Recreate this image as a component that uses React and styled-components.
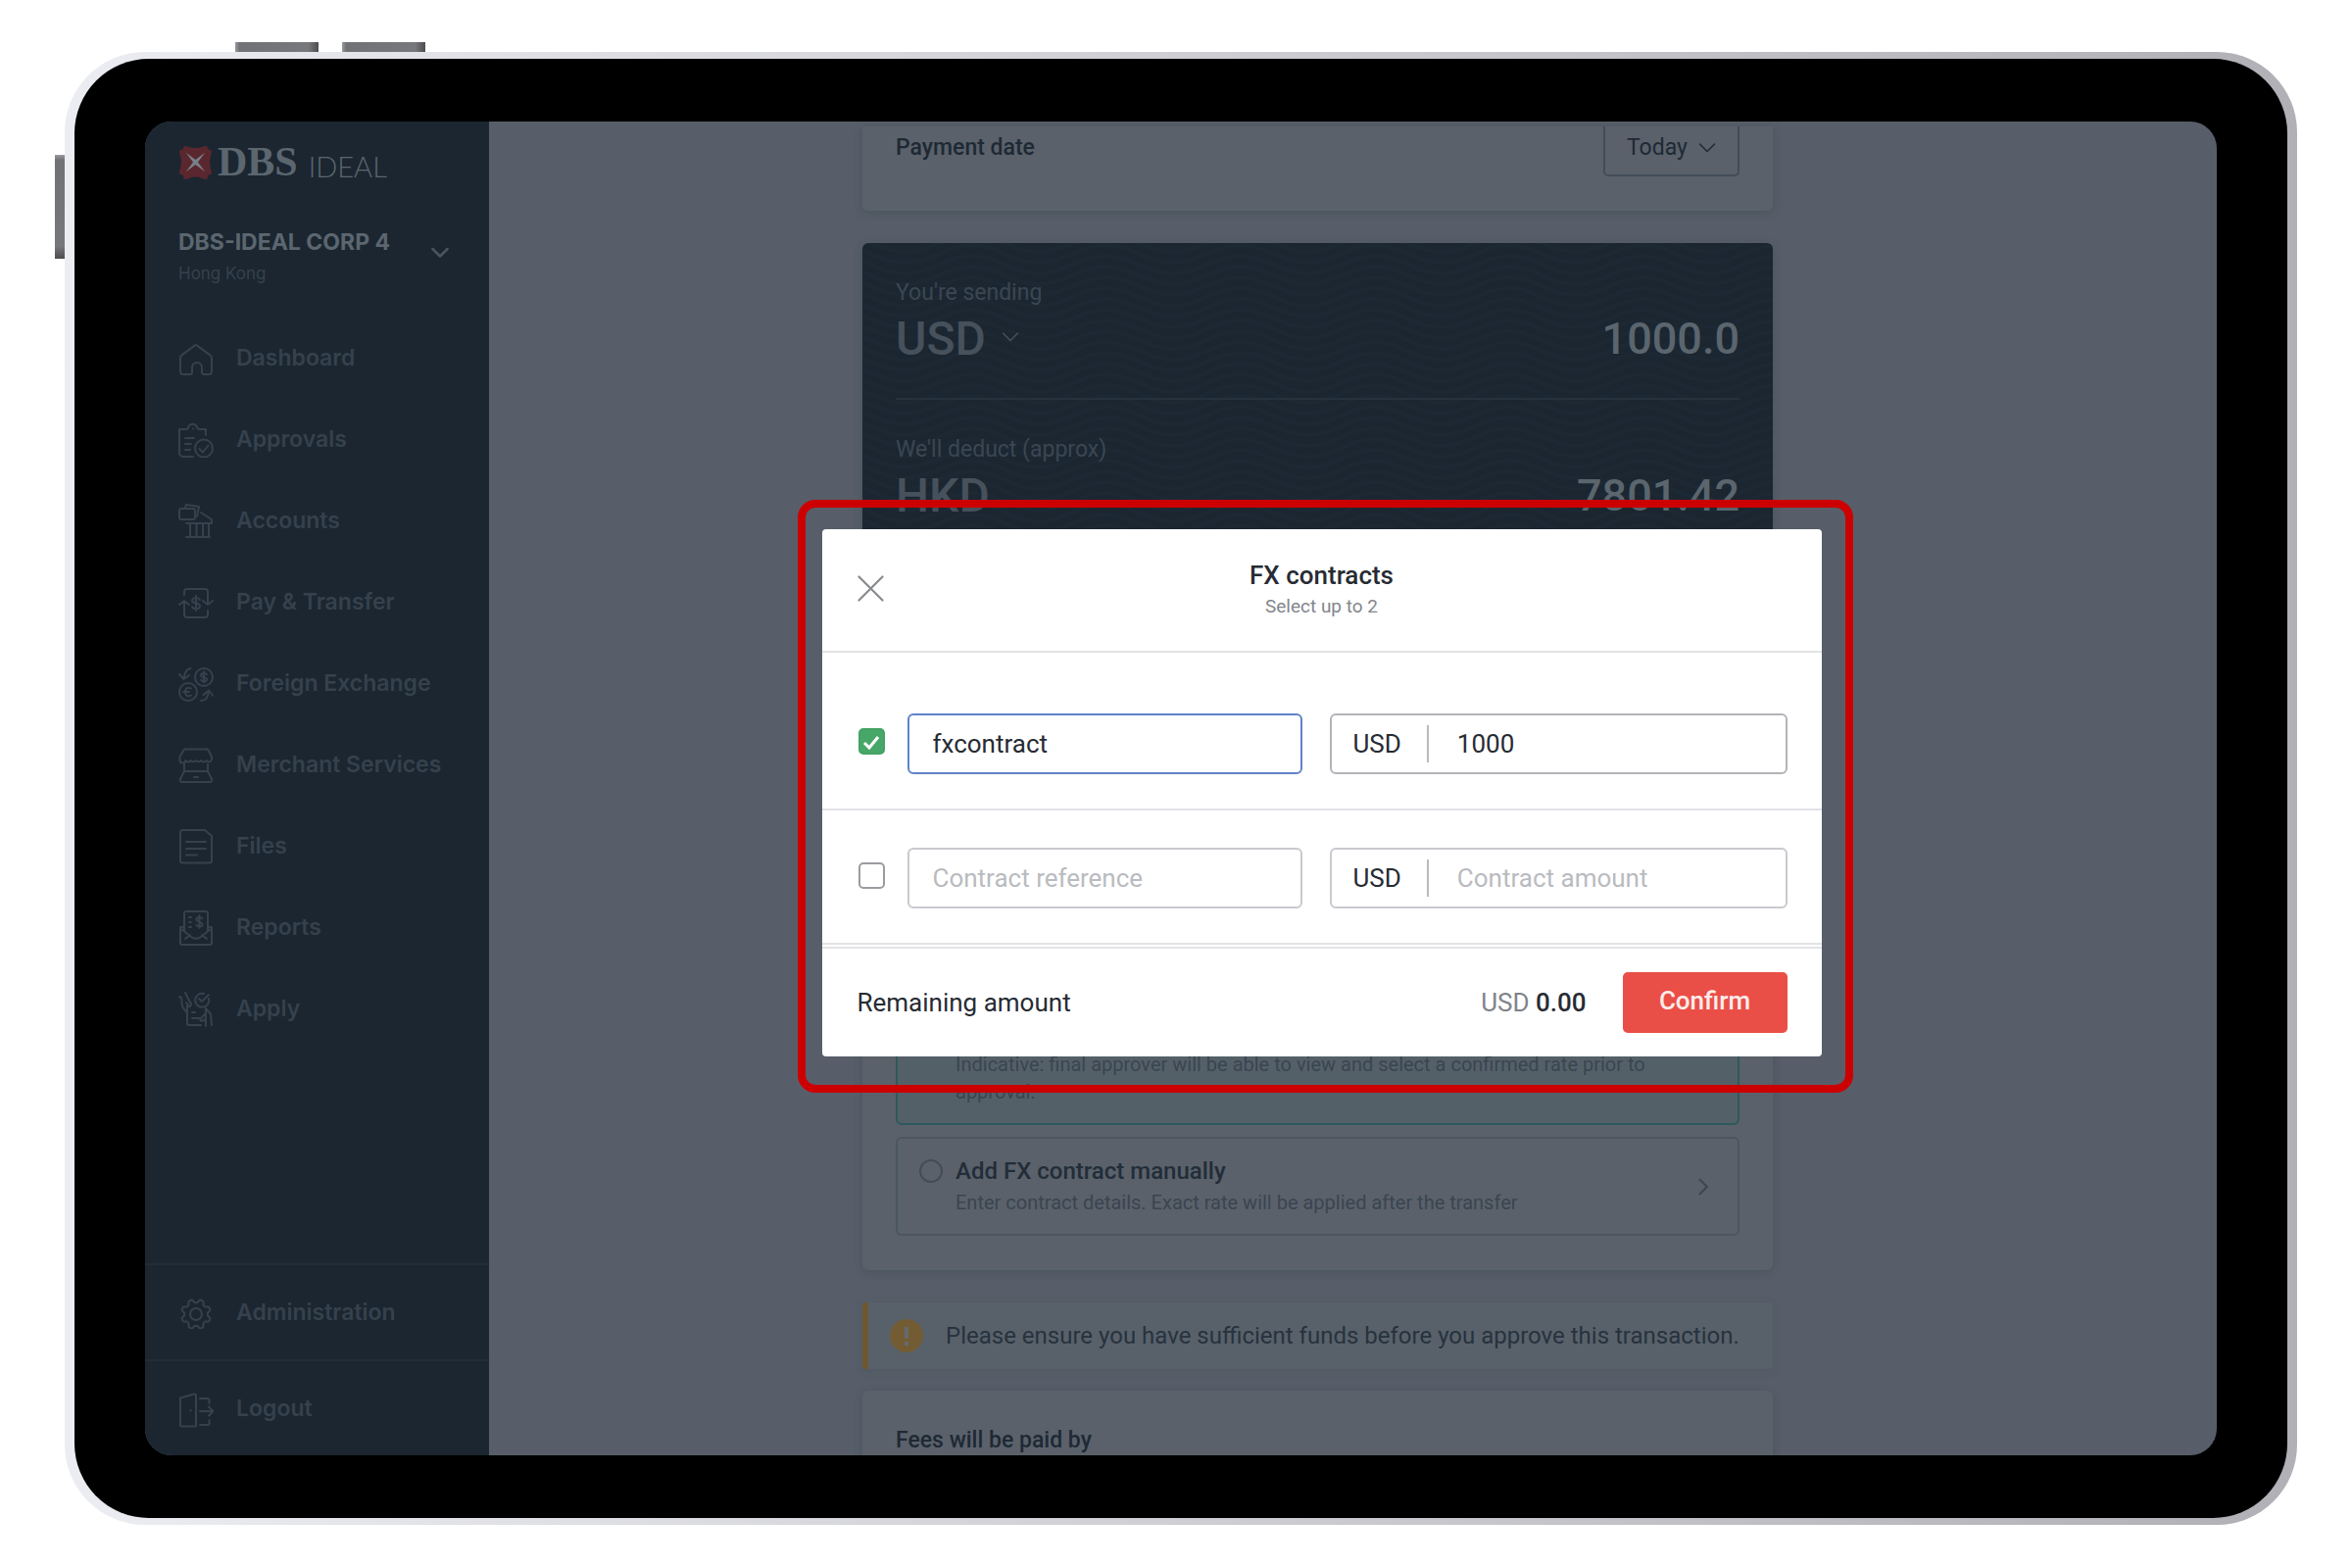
import { useId, useState } from "react";
import styled, { createGlobalStyle } from "styled-components";

const GlobalStyle = createGlobalStyle`
  :root {
    --color-ink: #1b2631;
    --color-page: #575e69;
    --color-card: #5a616a;
    --color-text: #1e2935;
    --color-text-soft: #3a4551;
    --color-nav: #35414c;
    --color-light: #5c666f;
    --color-line: #e2e3e6;

    --font-body: Roboto, "Liberation Sans", sans-serif;
    --font-nav: Inter, "Liberation Sans", sans-serif;
  }

  * {
    box-sizing: border-box;
  }

  body {
    margin: 0;
    background: #fff;
    font-family: var(--font-body);
  }

  button,
  input,
  select {
    font: inherit;
    color: inherit;
    margin: 0;
  }

  p,
  h1,
  h2 {
    margin: 0;
    font: inherit;
  }

  svg {
    display: block;
    flex: none;
  }
`;

/* ---------- Tablet ---------- */

const Page = styled.div`
  display: flex;
  height: 100vh;
  padding: 53px 56px 44px 66px;
`;

const Frame = styled.div`
  position: relative;
  display: flex;
  flex: 1;
  min-width: 0;
  padding: 7px 10px;
  border-radius: 82px;
  background: linear-gradient(90deg, #ecedf2, #b0b0b6);
`;

const Bezel = styled.div`
  display: flex;
  flex: 1;
  min-width: 0;
  padding: 64px 72px;
  border-radius: 76px;
  background: #000;
`;

const Screen = styled.div`
  display: flex;
  flex: 1;
  min-width: 0;
  overflow: hidden;
  border-radius: 27px;
  background: var(--color-page);
`;

const VolumeKeys = styled.div`
  position: absolute;
  top: -10px;
  left: 174px;
  display: flex;
  gap: 24px;

  span {
    width: 85px;
    height: 10px;
    background: linear-gradient(90deg, #9b9c9f, #717276 5%, #77787c 88%, #4c4c4e);
  }
`;

const PowerKey = styled.div`
  position: absolute;
  top: 105px;
  left: -10px;
  width: 10px;
  height: 106px;
  background: linear-gradient(#9b9c9f, #717276 5%, #77787c 88%, #4c4c4e);
`;

/* ---------- Sidebar ---------- */

const SidebarWrapper = styled.nav`
  display: flex;
  flex: none;
  flex-direction: column;
  width: 351px;
  background: var(--color-ink);
  color: var(--color-nav);
  font-family: var(--font-nav);
`;

const LogoRow = styled.div`
  display: flex;
  align-items: center;
  gap: 5px;
  height: 36px;
  margin: 23px 34px 0;
  color: var(--color-light);
  line-height: 36px;
`;

const LogoName = styled.span`
  font-family: "Liberation Serif", serif;
  font-size: 42px;
  font-weight: 700;
`;

const LogoProduct = styled.span`
  padding: 10px 0 0 6px;
  font-family: Lato, sans-serif;
  font-size: 29px;
  font-weight: 300;
`;

const Company = styled.button`
  display: flex;
  justify-content: space-between;
  margin: 49px 0 32px;
  padding: 0 41px 0 34px;
  border: 0;
  background: none;
  text-align: left;

  strong {
    display: block;
    color: var(--color-light);
    font-size: 23px;
    font-weight: 700;
    line-height: 30px;
  }

  small {
    display: block;
    margin-top: 5px;
    font-size: 17px;
    line-height: 24px;
  }

  svg {
    margin-top: 17px;
    color: #4a555f;
  }
`;

const NavLink = styled.a`
  display: flex;
  align-items: center;
  gap: 23px;
  height: ${({ $tall }) => ($tall ? "98px" : "83px")};
  padding: 0 34px;
  border-top: ${({ $tall }) => ($tall ? "2px solid #222d38" : "0")};
  color: inherit;
  font-size: 23px;
  font-weight: 600;
  text-decoration: none;

  svg {
    margin-top: 3px;
  }
`;

const NavFooter = styled.div`
  margin-top: auto;
`;

/* ---------- Transfer form ---------- */

const Main = styled.main`
  position: relative;
  flex: 1;
  min-width: 0;
  padding: 5px 72px 0 0;
  overflow: hidden;
`;

const Column = styled.div`
  display: flex;
  flex-direction: column;
  max-width: 929px;
  margin: 0 auto;
  color: var(--color-text);
  font-size: 23px;
  line-height: 28px;
`;

const Card = styled.section`
  border-radius: 6px;
  background: var(--color-card);
  box-shadow: 0 2px 8px rgba(40, 62, 66, 0.3);
`;

const DateCard = styled(Card)`
  display: flex;
  align-items: baseline;
  justify-content: space-between;
  padding: 0 34px 35px;
  border-radius: 0 0 6px 6px;
  font-weight: 500;
`;

const PickerWrapper = styled.div`
  position: relative;

  svg {
    position: absolute;
    top: ${({ $top }) => $top};
    right: ${({ $right }) => $right};
    pointer-events: none;
  }
`;

const DateSelect = styled.select`
  appearance: none;
  display: block;
  height: 51px;
  padding: 0 51px 6px 22px;
  border: 2px solid #414d58;
  border-top: 0;
  border-radius: 0 0 5px 5px;
  background: none;
  font-weight: 400;
`;

const ExchangeCard = styled(Card)`
  margin-top: 33px;
  overflow: hidden;
`;

const Amounts = styled.div`
  position: relative;
  padding: 0 34px;
  background: var(--color-ink);
  color: #3b4652;
`;

const WaveArt = styled.svg`
  position: absolute;
  top: 0;
  left: 0;
  width: 100%;
  height: 100%;
`;

const AmountBlock = styled.div`
  position: relative;
  padding: 37px 0 33px;
  border-bottom: ${({ $last }) => ($last ? "0" : "2px solid #25313c")};
`;

const AmountRow = styled.div`
  display: flex;
  justify-content: space-between;
  margin-top: 6px;
  color: #46515c;
  font-size: 48px;
  font-weight: 500;
  line-height: 54px;
`;

const CurrencySelect = styled.select`
  appearance: none;
  display: block;
  height: 54px;
  padding: 0 34px 0 0;
  border: 0;
  background: none;
`;

const BigInput = styled.input`
  width: 300px;
  height: 54px;
  padding: 0;
  border: 0;
  background: none;
  color: #5a656e;
  font-size: 45px;
  text-align: right;
`;

const BigAmount = styled.output`
  color: #5a656e;
  font-size: 45px;
`;

const Options = styled.div`
  display: grid;
  gap: 12px;
  padding: 453px 34px 35px;
`;

const Option = styled.label`
  display: flex;
  align-items: center;
  gap: 13px;
  padding: 18px 25px 18px 22px;
  border: 2px solid ${({ $active }) => ($active ? "#2d595b" : "#4b5660")};
  border-radius: 6px;
  background: ${({ $active }) => ($active ? "#546068" : "none")};

  svg {
    color: #3c4752;
  }
`;

const Radio = styled.input`
  appearance: none;
  flex: none;
  align-self: flex-start;
  width: 24px;
  height: 24px;
  margin-top: 3px;
  border: 2px solid #424d58;
  border-radius: 50%;

  &:checked {
    border: 8px solid #2d595b;
  }
`;

const OptionText = styled.div`
  flex: 1;
  color: var(--color-text-soft);
  font-size: 20px;
  line-height: 28px;

  h2 {
    min-height: 30px;
    margin-bottom: 3px;
    color: #222d39;
    font-size: 24px;
    font-weight: 500;
    line-height: 30px;
  }
`;

const Alert = styled.div`
  display: flex;
  align-items: center;
  gap: 23px;
  height: 68px;
  margin-top: 33px;
  padding-left: 22px;
  border-left: 6px solid #6f5831;
  border-radius: 4px;
  background: #58616a;
  color: #27323e;
  font-size: 24px;
  box-shadow: 0 2px 8px rgba(40, 62, 66, 0.15);
`;

const FeesCard = styled(Card)`
  height: 160px;
  margin-top: 22px;
  padding: 37px 34px;
  font-weight: 500;
`;

/* ---------- FX contracts dialog ---------- */

const Overlay = styled.div`
  position: absolute;
  inset: 0;
  display: flex;
  align-items: center;
  justify-content: center;
  padding: 15px 57px 0 0;
`;

const Highlight = styled.div`
  width: 100%;
  max-width: 1077px;
  padding: 22px 24px 29px 17px;
  border: 8px solid #c00;
  border-radius: 18px;
`;

const Dialog = styled.form`
  border-radius: 4px;
  background: #fff;
  color: #272b33;
  font-size: 26px;
  line-height: 32px;
`;

const DialogHeader = styled.header`
  display: grid;
  grid-template-columns: 1fr auto 1fr;
  align-items: center;
  height: 126px;
  padding: 0 36px 2px;
  border-bottom: 2px solid var(--color-line);
  text-align: center;

  h1 {
    font-weight: 500;
  }

  p {
    margin-top: 4px;
    color: #83868c;
    font-size: 19px;
    line-height: 24px;
  }
`;

const CloseButton = styled.button`
  justify-self: start;
  padding: 0;
  border: 0;
  background: none;
  color: #8a8c90;
`;

const ContractList = styled.div`
  padding-top: 24px;
`;

const ContractRow = styled.div`
  display: flex;
  align-items: center;
  gap: 23px;
  padding: 38px 35px 35px 37px;
  border-bottom: 2px solid var(--color-line);
`;

const CheckWrapper = styled.div`
  position: relative;
  flex: none;
  width: 27px;
  height: 27px;
  margin-bottom: 5px;

  svg {
    position: absolute;
    inset: 0;
    pointer-events: none;
  }
`;

const CheckBox = styled.input`
  appearance: none;
  display: block;
  width: 27px;
  height: 27px;
  border: 2px solid #9a9ca1;
  border-radius: 5px;
  background: #fff;

  &:checked {
    border-color: #43a264;
    background: #46a768;
  }
`;

const Fields = styled.div`
  display: grid;
  flex: 1;
  grid-template-columns: 403fr 467fr;
  gap: 28px;
`;

const fieldBorder = ({ $focused, $filled }) =>
  $focused ? "#5f83c9" : $filled ? "#b3b4b8" : "#c8cace";

const Input = styled.input`
  min-width: 0;
  width: 100%;
  height: 62px;
  padding: 0 24px;
  border: 2px solid ${fieldBorder};
  border-radius: 6px;
  outline: 0;
  background: #fff;

  &::placeholder {
    color: #b9bbc0;
    opacity: 1;
  }
`;

const AmountField = styled.div`
  display: flex;
  align-items: center;
  height: 62px;
  padding-left: 22px;
  border: 2px solid ${fieldBorder};
  border-radius: 6px;

  label {
    padding-right: 26px;
    line-height: 38px;
    border-right: 2px solid #b9bbbf;
  }

  input {
    height: 58px;
    border: 0;
    padding-left: 29px;
  }
`;

const DialogFooter = styled.footer`
  display: flex;
  align-items: center;
  height: 112px;
  margin-top: 2px;
  padding: 0 35px 0 36px;
  border-top: 2px solid var(--color-line);
`;

const Remaining = styled.p`
  margin: 0 37px 0 auto;
  color: #808389;

  strong {
    color: #272b33;
    font-weight: 500;
  }
`;

const ConfirmButton = styled.button`
  width: 168px;
  height: 62px;
  padding: 0 0 4px;
  border: 0;
  border-radius: 5px;
  background: #ea4f47;
  color: #fdeceb;
  font-weight: 500;
`;

/* ---------- Icons ---------- */

const Icon = ({ children, size = 36, width = 2 }) => (
  <svg
    width={size}
    height={size}
    viewBox="0 0 36 36"
    fill="none"
    stroke="currentColor"
    strokeWidth={width}
    strokeLinecap="round"
    strokeLinejoin="round"
    aria-hidden="true"
  >
    {children}
  </svg>
);

const HomeIcon = () => (
  <Icon>
    <path d="M2 17a3 3 0 0 1 1.2-2.4l13.3-10a2 2 0 0 1 2.6 0l13.6 10A3 3 0 0 1 34 17v14a3 3 0 0 1-3 3h-5a2 2 0 0 1-2-2v-5a5 5 0 0 0-10 0v5a2 2 0 0 1-2 2H5a3 3 0 0 1-3-3z" />
  </Icon>
);

const ApprovalsIcon = () => (
  <Icon>
    <path d="M15 35H5a4 4 0 0 1-4-4V7h7c1.500 0 2-1 2.300-2.200a4.500 4.500 0 0 1 8.600 0C19.200 6 20 7 21.500 7H28v6" />
    <path d="M15 6.500v.1M7 16h9M7 22h6M7 28h5" />
    <circle cx="26" cy="26.500" r="9" />
    <path d="M21.500 27l3.500 3.500 5.500-7" />
  </Icon>
);

const AccountsIcon = () => (
  <Icon>
    <rect x="1" y="5" width="16" height="11" rx="2" />
    <path d="M7 4l1-3 13 2-2 10M23 9l11 7v4H8M12 20v14M18.500 20v14M25 20v14M31 20v14M8 34h24" />
  </Icon>
);

const TransferIcon = () => (
  <Icon>
    <path d="M6 10V7a3 3 0 0 1 3-3h18a3 3 0 0 1 3 3v13M25 16l5 4 5-4M30 26v4a3 3 0 0 1-3 3H9a3 3 0 0 1-3-3V16M1 20l5-4 5 4" />
    <path d="M22 15c-.8-1.400-2.300-2-4-2-2.200 0-4 1-4 3 0 3.500 8 1.700 8 5.200 0 2-1.800 3-4 3-1.800 0-3.300-.6-4-2M18 11v15" />
  </Icon>
);

const ExchangeIcon = () => (
  <Icon>
    <circle cx="26" cy="11" r="9" />
    <circle cx="10" cy="26" r="9" />
    <path d="M29 8.300c-.6-1-1.700-1.400-3-1.400-1.700 0-3 .8-3 2.100 0 3 6 1.300 6 4.200 0 1.300-1.300 2-3 2-1.400 0-2.500-.5-3-1.400M26 5.500v11" />
    <path d="M13 22.500c-3-2-6 0-6 3.500s3 5.500 6 3.500M5 26h6" />
    <path d="M12.500 2C8 3 6 7 5.500 13M1 8l4.500 5L11 9M23 35c5 0 7.500-4 8-10M25.500 29l5.500-4.500 4 5" />
  </Icon>
);

const MerchantIcon = () => (
  <Icon>
    <path d="M6 1.500h24L34 9v3a3 3 0 0 1-5.500 1 3.200 3.200 0 0 1-5.300 0 3.200 3.200 0 0 1-5.200 0 3.200 3.200 0 0 1-5.200 0 3.200 3.200 0 0 1-5.300 0A3 3 0 0 1 1.500 12V9z" />
    <path d="M6 17v7h24v-7M6 24l-4 8a2 2 0 0 0 2 3h28a2 2 0 0 0 2-3l-4-8M16 30h4" />
  </Icon>
);

const FilesIcon = () => (
  <Icon>
    <path d="M5 1h22l7 6v25a2.500 2.500 0 0 1-2.500 2.500h-27A2.500 2.500 0 0 1 2 32V4a3 3 0 0 1 3-3zM8 13h20M8 20h20M8 26.500h11" />
  </Icon>
);

const ReportsIcon = () => (
  <Icon>
    <path d="M6 21V3a2 2 0 0 1 2-2h20a2 2 0 0 1 2 2v18M6 17H2v16a2 2 0 0 0 2 2h28a2 2 0 0 0 2-2V17h-4M3 19l10 8c3 2 7 2 10 0l10-8M12 25l-5 4M24 25l5 4" />
    <path d="M11 7h2M11 12h2M11 17h2" />
    <path d="M24.500 8.300c-.6-1-1.700-1.400-3-1.400-1.700 0-3 .8-3 2.300 0 3.200 6 1.800 6 5 0 1.500-1.300 2.200-3 2.200-1.400 0-2.500-.5-3-1.400M21.500 5v13" />
  </Icon>
);

const ApplyIcon = () => (
  <Icon>
    <path d="M1 5l2 1 1 9 5 7M7 1l5 10c2 1 1 4-1 4l-3-4M9 14v18a2 2 0 0 0 2 2h12M9 22v9" />
    <path d="M31 7a7 7 0 1 1-5-5M21 7l3 3 7-7" />
    <path d="M14 21h3M14 27h7M28 35v-7l-4 2c-2 0-2-2-1-3l5-5v-5l5 6 1 11M28 22v5" />
  </Icon>
);

/* eight rounded teeth around a hub */
const gearPoints = Array.from({ length: 160 }, (_, i) => {
  const angle = (i / 160) * Math.PI * 2;
  const radius = 13.5 - 1.7 * Math.tanh(2 * Math.cos(angle * 8));
  const x = 18 + radius * Math.cos(angle);
  const y = 18 + radius * Math.sin(angle);
  return `${x.toFixed(2)},${y.toFixed(2)}`;
}).join(" ");

const GearIcon = () => (
  <Icon>
    <polygon points={gearPoints} />
    <circle cx="18" cy="18" r="6" />
  </Icon>
);

const LogoutIcon = () => (
  <Icon>
    <path d="M2 5.500L16 1.500a1.500 1.500 0 0 1 2 1.500v31.500H4a2 2 0 0 1-2-2zM12.500 18v.5M22 6h8a1.500 1.500 0 0 1 1.500 1.500V11M22 33h8a1.500 1.500 0 0 0 1.500-1.500V28M22 19h13M31 14.500l4.500 4.500-4.500 4.500" />
  </Icon>
);

const Chevron = ({ size = 18, width = 4, right }) => (
  <Icon size={size} width={width}>
    <path d={right ? "M12 5l13 13-13 13" : "M3 10l15 15 15-15"} />
  </Icon>
);

const LogoMark = () => (
  <svg width="35" height="35" viewBox="0 0 36 36" aria-hidden="true">
    <path
      d="M6 1q3 0 5 1 7 2 14 0 2-1 5-1l1 3 4 2q0 3-1 5-2 7 0 14 1 2 1 5l-4 2-1 4q-3 0-5-1-7-3-14 0-2 1-5 1l-1-4-4-2q0-3 1-5 2-7 0-14-1-2-1-5l4-2z"
      fill="#5b272e"
    />
    <path
      d="M8 8l10 7.500L28 8l-7.500 10L28 28l-10-7.500L8 28l7.500-10z"
      fill="#77818a"
    />
  </svg>
);

const AlertIcon = () => (
  <svg width="34" height="34" viewBox="0 0 34 34" aria-hidden="true">
    <circle cx="17" cy="17" r="17" fill="#735c34" />
    <path
      d="M17 8v12M17 23v4"
      fill="none"
      stroke="#646a6d"
      strokeWidth="4"
    />
  </svg>
);

const waveRows = Array.from({ length: 66 }, (_, i) => i * 11 - 20);

const Waves = () => (
  <WaveArt aria-hidden="true">
    <defs>
      <pattern
        id="waves"
        x="-25"
        width="137"
        height="720"
        patternUnits="userSpaceOnUse"
      >
        {waveRows.map((y) => (
          <path
            key={y}
            d={`M-1 ${y}c26 0 43 18 69 18s43-18 70-18`}
            fill="none"
            stroke="#1c2934"
            strokeWidth="3"
          />
        ))}
      </pattern>
    </defs>
    <rect width="100%" height="100%" fill="url(#waves)" />
  </WaveArt>
);

/* ---------- Sections ---------- */

const links = [
  ["Dashboard", HomeIcon],
  ["Approvals", ApprovalsIcon],
  ["Accounts", AccountsIcon],
  ["Pay & Transfer", TransferIcon],
  ["Foreign Exchange", ExchangeIcon],
  ["Merchant Services", MerchantIcon],
  ["Files", FilesIcon],
  ["Reports", ReportsIcon],
  ["Apply", ApplyIcon],
];

const Sidebar = () => (
  <SidebarWrapper>
    <LogoRow>
      <LogoMark />
      <LogoName>DBS</LogoName>
      <LogoProduct>IDEAL</LogoProduct>
    </LogoRow>
    <Company type="button">
      <span>
        <strong>DBS-IDEAL CORP 4</strong>
        <small>Hong Kong</small>
      </span>
      <Chevron width={5} />
    </Company>
    {links.map(([label, LinkIcon]) => (
      <NavLink href="#" key={label}>
        <LinkIcon />
        {label}
      </NavLink>
    ))}
    <NavFooter>
      <NavLink href="#" $tall>
        <GearIcon />
        Administration
      </NavLink>
      <NavLink href="#" $tall>
        <LogoutIcon />
        Logout
      </NavLink>
    </NavFooter>
  </SidebarWrapper>
);

const TransferForm = () => (
  <Column>
    <DateCard>
      <label htmlFor="payment-date">Payment date</label>
      <PickerWrapper $top="13px" $right="24px">
        <DateSelect id="payment-date">
          <option>Today</option>
        </DateSelect>
        <Chevron width={3} />
      </PickerWrapper>
    </DateCard>

    <ExchangeCard>
      <Amounts>
        <Waves />
        <AmountBlock>
          <label htmlFor="sending">You're sending</label>
          <AmountRow>
            <PickerWrapper $top="16px" $right="0">
              <CurrencySelect aria-label="Currency">
                <option>USD</option>
              </CurrencySelect>
              <Chevron width={3} />
            </PickerWrapper>
            <BigInput id="sending" defaultValue="1000.0" />
          </AmountRow>
        </AmountBlock>
        <AmountBlock $last>
          <p>We'll deduct (approx)</p>
          <AmountRow>
            <span>HKD</span>
            <BigAmount>7801.42</BigAmount>
          </AmountRow>
        </AmountBlock>
      </Amounts>
      <Options>
        <Option $active>
          <Radio type="radio" name="rate" defaultChecked />
          <OptionText>
            <h2 />
            <p>
              Indicative: final approver will be able to view and select a
              confirmed rate prior to approval.
            </p>
          </OptionText>
        </Option>
        <Option>
          <Radio type="radio" name="rate" />
          <OptionText>
            <h2>Add FX contract manually</h2>
            <p>
              Enter contract details. Exact rate will be applied after the
              transfer
            </p>
          </OptionText>
          <Chevron size={20} width={4} right />
        </Option>
      </Options>
    </ExchangeCard>

    <Alert role="status">
      <AlertIcon />
      Please ensure you have sufficient funds before you approve this
      transaction.
    </Alert>

    <FeesCard>
      <h2>Fees will be paid by</h2>
    </FeesCard>
  </Column>
);

const Contract = ({ reference = "", amount = "", focused }) => {
  const id = useId();
  const [checked, setChecked] = useState(Boolean(reference));
  const filled = Boolean(reference);

  return (
    <ContractRow>
      <CheckWrapper>
        <CheckBox
          type="checkbox"
          aria-label="Use this contract"
          checked={checked}
          onChange={(e) => setChecked(e.target.checked)}
        />
        {checked && (
          <svg width="27" height="27" viewBox="0 0 27 27" aria-hidden="true">
            <path
              d="M6 15l5 5 9-11"
              fill="none"
              stroke="#fff"
              strokeWidth="3"
            />
          </svg>
        )}
      </CheckWrapper>
      <Fields>
        <Input
          aria-label="Contract reference"
          placeholder="Contract reference"
          defaultValue={reference}
          $focused={focused}
        />
        <AmountField $filled={filled}>
          <label htmlFor={id}>USD</label>
          <Input id={id} placeholder="Contract amount" defaultValue={amount} />
        </AmountField>
      </Fields>
    </ContractRow>
  );
};

const ContractsDialog = () => (
  <Overlay>
    <Highlight>
      <Dialog role="dialog" aria-labelledby="fx-title">
        <DialogHeader>
          <CloseButton type="button" aria-label="Close">
            <Icon size={27} width={3}>
              <path d="M2 2l32 32M34 2L2 34" />
            </Icon>
          </CloseButton>
          <div>
            <h1 id="fx-title">FX contracts</h1>
            <p>Select up to 2</p>
          </div>
        </DialogHeader>
        <ContractList>
          <Contract reference="fxcontract" amount="1000" focused />
          <Contract />
        </ContractList>
        <DialogFooter>
          <span>Remaining amount</span>
          <Remaining>
            USD <strong>0.00</strong>
          </Remaining>
          <ConfirmButton type="button">Confirm</ConfirmButton>
        </DialogFooter>
      </Dialog>
    </Highlight>
  </Overlay>
);

const App = () => (
  <>
    <GlobalStyle />
    <Page>
      <Frame>
        <VolumeKeys>
          <span />
          <span />
        </VolumeKeys>
        <PowerKey />
        <Bezel>
          <Screen>
            <Sidebar />
            <Main>
              <TransferForm />
              <ContractsDialog />
            </Main>
          </Screen>
        </Bezel>
      </Frame>
    </Page>
  </>
);

export default App;
